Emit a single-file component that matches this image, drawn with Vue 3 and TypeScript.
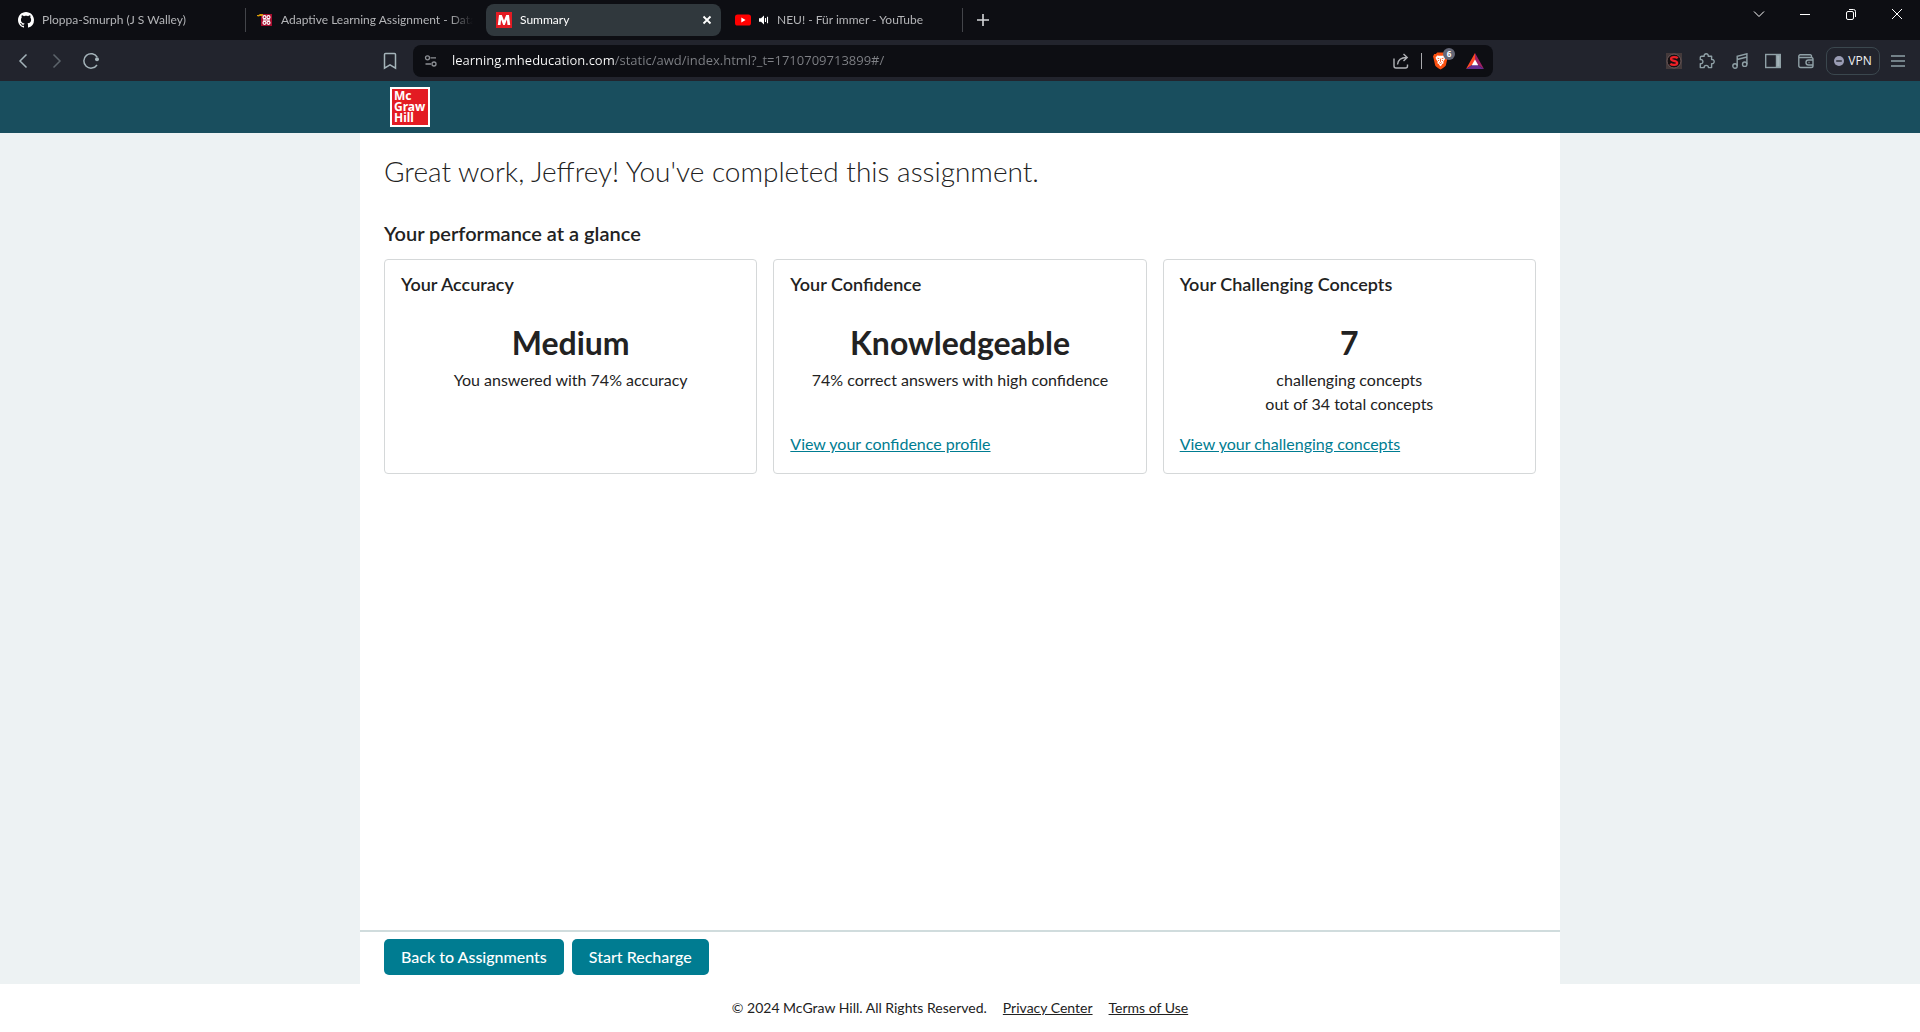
<script setup lang="ts">
import { ref } from 'vue'

interface Tab {
  id: string
  title: string
  active?: boolean
  divider?: boolean
}

interface Card {
  title: string
  value: string
  lines: string[]
  link?: string
}

const tabs: Tab[] = [
  { id: 'github', title: 'Ploppa-Smurph (J S Walley)', divider: true },
  { id: 'assignment', title: 'Adaptive Learning Assignment - Data' },
  { id: 'summary', title: 'Summary', active: true },
  { id: 'youtube', title: 'NEU! - Für immer - YouTube', divider: true },
]

const address = ref('learning.mheducation.com/static/awd/index.html?_t=1710709713899#/')

const cards: Card[] = [
  { title: 'Your Accuracy', value: 'Medium', lines: ['You answered with 74% accuracy'] },
  {
    title: 'Your Confidence',
    value: 'Knowledgeable',
    lines: ['74% correct answers with high confidence'],
    link: 'View your confidence profile',
  },
  {
    title: 'Your Challenging Concepts',
    value: '7',
    lines: ['challenging concepts', 'out of 34 total concepts'],
    link: 'View your challenging concepts',
  },
]
</script>

<template>
  <div class="window">
    <div class="tab-strip">
      <div class="tabs" role="tablist">
        <template v-for="tab in tabs" :key="tab.id">
          <div class="tab" :class="{ active: tab.active }" role="tab" :aria-selected="!!tab.active">
            <svg v-if="tab.id === 'github'" class="favicon" viewBox="0 0 16 16" aria-hidden="true">
              <path fill="#fff" d="M8 0C3.58 0 0 3.58 0 8c0 3.54 2.29 6.53 5.47 7.59.4.07.55-.17.55-.38 0-.19-.01-.82-.01-1.49-2.01.37-2.53-.49-2.69-.94-.09-.23-.48-.94-.82-1.13-.28-.15-.68-.52-.01-.53.63-.01 1.08.58 1.23.82.72 1.21 1.87.87 2.33.66.07-.52.28-.87.51-1.07-1.78-.2-3.64-.89-3.64-3.95 0-.87.31-1.59.82-2.15-.08-.2-.36-1.02.08-2.12 0 0 .67-.21 2.2.82.64-.18 1.32-.27 2-.27s1.36.09 2 .27c1.53-1.04 2.2-.82 2.2-.82.44 1.1.16 1.92.08 2.12.51.56.82 1.27.82 2.15 0 3.07-1.87 3.75-3.65 3.95.29.25.54.73.54 1.48 0 1.07-.01 1.93-.01 2.2 0 .21.15.46.55.38A8.01 8.01 0 0 0 16 8c0-4.42-3.58-8-8-8z" />
            </svg>
            <svg v-else-if="tab.id === 'assignment'" class="favicon" viewBox="0 0 16 16" aria-hidden="true">
              <rect x="4" y="2" width="11" height="12" fill="#a50d2e" />
              <path d="M0 4V3h1.500l1.500-1h3v2H3L1.500 4.500z" fill="#d99a06" />
              <g fill="none" stroke="#fff" stroke-width="1.200">
                <circle cx="7.500" cy="5.200" r="1.500" /><circle cx="11.500" cy="5.200" r="1.500" />
                <circle cx="7.500" cy="10.800" r="1.500" /><circle cx="11.500" cy="10.800" r="1.500" />
                <path d="M6 8h7" />
              </g>
            </svg>
            <svg v-else-if="tab.id === 'summary'" class="favicon" viewBox="0 0 16 16" aria-hidden="true">
              <rect width="16" height="16" fill="#e31b23" />
              <path d="M1.800 13L3 3h2.800L8 8.400 10.200 3H13l1.200 10h-2.700l-.6-5.500L8.800 13H7.200L5.100 7.500 4.500 13z" fill="#fff" />
            </svg>
            <template v-else>
              <svg class="favicon" viewBox="0 0 16 16" aria-hidden="true">
                <rect y="2.500" width="16" height="11" rx="2.600" fill="#f00" />
                <path d="M6.300 5.600v4.800L10.600 8z" fill="#fff" />
              </svg>
              <svg class="speaker" viewBox="0 0 10 10" aria-hidden="true">
                <path d="M0 3.200h2L5 .500v9L2 6.800H0z" fill="#fff" />
                <path d="M6.500 3v4M8.500 1.800v6.400" stroke="#fff" stroke-width="1.100" fill="none" />
              </svg>
            </template>
            <span class="tab-title">{{ tab.title }}</span>
            <button v-if="tab.active" class="tab-close" aria-label="Close tab">
              <svg viewBox="0 0 10 10"><path d="M1.500 1.500l7 7M8.500 1.500l-7 7" stroke="#fff" stroke-width="1.800" /></svg>
            </button>
          </div>
          <span class="divider" :class="{ shown: tab.divider }"></span>
        </template>
        <button class="new-tab" aria-label="New tab">
          <svg viewBox="0 0 12 12"><path d="M6 0v12M0 6h12" stroke="#d5d7da" stroke-width="1.600" /></svg>
        </button>
      </div>
      <div class="window-controls">
        <button aria-label="Search tabs"><svg viewBox="0 0 12 12"><path d="M1 3.500l5 5 5-5" /></svg></button>
        <button aria-label="Minimize"><svg viewBox="0 0 12 12"><path d="M1 6.500h10" /></svg></button>
        <button aria-label="Restore">
          <svg viewBox="0 0 12 12"><rect x="1.500" y="3.500" width="7" height="8" rx="1.500" /><path d="M4 1.500h4.500a2 2 0 0 1 2 2V9" /></svg>
        </button>
        <button aria-label="Close window"><svg viewBox="0 0 12 12"><path d="M1 1l10 10M11 1L1 11" /></svg></button>
      </div>
    </div>

    <div class="toolbar">
      <div class="nav-group">
        <button aria-label="Back"><svg viewBox="0 0 18 18"><path d="M12.500 2.500L6 9l6.500 6.500" /></svg></button>
        <button aria-label="Forward" disabled><svg viewBox="0 0 18 18"><path d="M5.500 2.500L12 9l-6.500 6.500" /></svg></button>
        <button aria-label="Reload">
          <svg viewBox="0 0 18 18"><path d="M15.200 5.200A7.200 7.200 0 1 0 15 13" /><circle cx="15" cy="7.300" r="2" fill="#a4b3b9" stroke="none" /></svg>
        </button>
        <button class="bookmark" aria-label="Bookmark this page">
          <svg viewBox="0 0 18 18"><path d="M3.500 2.500a1 1 0 0 1 1-1h9a1 1 0 0 1 1 1v13.700L9 12.800l-5.500 3.400z" /></svg>
        </button>
      </div>

      <div class="address-bar">
        <button class="site-info" aria-label="Site information">
          <svg viewBox="0 0 14 14"><circle cx="3.500" cy="3.800" r="2" /><path d="M6.500 3.800H12M1.500 10h5.500" /><circle cx="10" cy="10" r="2" /></svg>
        </button>
        <input v-model="address" class="address" type="text" aria-label="Address" spellcheck="false" />
        <button class="share" aria-label="Share">
          <svg viewBox="0 0 18 18"><path d="M2 6.500V14a2 2 0 0 0 2 2h9.500a2 2 0 0 0 2-2v-1.500M5.500 12.500C6 8 8.500 5.500 14.500 5.500M11.500 2l3.700 3.500-3.700 3.500" /></svg>
        </button>
        <span class="bar-rule"></span>
        <button class="shield" aria-label="Brave Shields">
          <svg viewBox="0 0 16 18">
            <path d="M4.500 0h7l1.500 1.600 1.700-.2L16 4.200l-.6 1.800-1.600 7.200c-.3 1.300-1.400 2.100-5.800 4.800-4.400-2.700-5.500-3.500-5.800-4.800L.600 6 0 4.200l1.300-2.800 1.700.2z" fill="#fb5010" />
            <path d="M4.500 3l2 .5h3l2-.5 1.800 2.500-.8 2-1.500 2 .3 1.800-1.500.9-.9 1.600L8 14.600l-.9-.8-.9-1.600-1.500-.9.300-1.800-1.500-2-.8-2z" fill="#fff" />
            <path d="M4.800 6l1.900.5M11.200 6l-1.900.5M8 6.500v3.500M6.500 10.700L8 11.600l1.500-.9M5.300 8.500h1.200M9.500 8.500h1.200" stroke="#fb5010" stroke-width=".9" fill="none" />
          </svg>
          <span class="badge">6</span>
        </button>
        <button class="rewards" aria-label="Brave Rewards">
          <svg viewBox="0 0 18 16">
            <path d="M9 0L0 16l9-6z" fill="#ff4724" /><path d="M9 0l9 16-9-6z" fill="#9e1f63" /><path d="M0 16h18l-9-6z" fill="#662d91" />
            <path d="M9 6.400L5.700 12.200h6.600z" fill="#fff" />
          </svg>
        </button>
      </div>

      <div class="extension-group">
        <button aria-label="S extension">
          <svg viewBox="0 0 16 16">
            <rect width="16" height="16" fill="#443a3b" /><circle cx="8" cy="8" r="7" fill="#151012" stroke="#6a5a5c" stroke-width="1" />
            <path d="M11.700 5.200C10.500 3.700 5 3.600 5 6c0 2.500 6.200 1.200 6.200 4 0 2.500-5.500 2.300-6.900.7" fill="none" stroke="#ee2027" stroke-width="2.200" />
          </svg>
        </button>
        <button aria-label="Extensions">
          <svg class="line" viewBox="0 0 16 16"><path d="M2.600 3.200h2.600C4.900 1.700 5.800.8 7.200.8s2.300.9 2 2.400h3.400v3.400c1.600-.3 2.600.6 2.600 2s-1 2.300-2.600 2v4H9.400c.2-1.500-.8-2.200-2.200-2.200s-2.300.7-2 2.200H1.300v-4c1.700.3 2.600-.6 2.600-2s-.9-2.200-2.600-2V4.500a1.300 1.300 0 0 1 1.300-1.300z" stroke-linejoin="round" /></svg>
        </button>
        <button aria-label="Media">
          <svg class="line" viewBox="0 0 16 16"><circle cx="3" cy="13" r="2.200" /><circle cx="12.700" cy="11.200" r="2.200" /><path d="M5.200 13V3.300L14.900.8v10.400M5.200 6.500l9.700-2.500" /></svg>
        </button>
        <button aria-label="Side panel">
          <svg class="line" viewBox="0 0 16 16"><rect x=".7" y="1.500" width="14.600" height="13" /><path d="M11.500 2h3.500v12h-3.500z" fill="#a4b3b9" /></svg>
        </button>
        <button aria-label="Wallet">
          <svg class="line" viewBox="0 0 16 16"><path d="M13.500 4.500V3a1.200 1.200 0 0 0-1.200-1.200H2.200A1.300 1.300 0 0 0 .8 3.100v9.600a1.800 1.800 0 0 0 1.800 1.800h10.600a1.800 1.800 0 0 0 1.800-1.800V6.300a1.800 1.800 0 0 0-1.800-1.800H2.200A1.300 1.300 0 0 1 .8 3.100M15 7h-4.500a2.500 2.500 0 0 0 0 5H15M10.500 9.500h1" /></svg>
        </button>
        <button class="vpn">
          <svg viewBox="0 0 10 10" aria-hidden="true"><circle cx="5" cy="5" r="5" fill="#9a9cb4" /><path d="M2.200 5h5.600" stroke="#22242d" stroke-width="1.400" /></svg>
          VPN
        </button>
        <button class="menu" aria-label="Menu">
          <svg class="line" viewBox="0 0 14 14"><path d="M0 2h14M0 7h14M0 12h14" /></svg>
        </button>
      </div>
    </div>

    <header class="site-header">
      <div class="site-header-inner">
        <a class="logo" href="#">Mc<br />Graw<br />Hill</a>
      </div>
    </header>

    <div class="page">
      <main class="content">
        <section class="summary">
          <h1>Great work, Jeffrey! You've completed this assignment.</h1>
          <h2>Your performance at a glance</h2>
          <div class="cards">
            <article v-for="card in cards" :key="card.title" class="card">
              <h3>{{ card.title }}</h3>
              <p class="value">{{ card.value }}</p>
              <p v-for="line in card.lines" :key="line" class="detail">{{ line }}</p>
              <a v-if="card.link" href="#">{{ card.link }}</a>
            </article>
          </div>
        </section>
        <div class="actions">
          <button>Back to Assignments</button>
          <button>Start Recharge</button>
        </div>
      </main>
    </div>

    <footer class="footer">
      <span>© 2024 McGraw Hill. All Rights Reserved.</span>
      <a href="#">Privacy Center</a>
      <a href="#">Terms of Use</a>
    </footer>
  </div>
</template>

<style>
body {
  margin: 0;
}
</style>

<style scoped>
.window {
  display: flex;
  flex-direction: column;
  min-height: 100vh;
  background: #fff;
  color: #222;
  font-family: Lato, "Open Sans", sans-serif;
}

button {
  margin: 0;
  padding: 0;
  border: 0;
  background: none;
  color: inherit;
  font: inherit;
}

svg {
  display: block;
  flex: none;
}

/* Tab strip */
.tab-strip {
  display: flex;
  justify-content: space-between;
  height: 40px;
  background: #0d0e13;
  color: #b4b5b8;
  font-size: 12px;
  line-height: 16px;
}

.tabs {
  display: flex;
  align-items: center;
  flex: 1;
  min-width: 0;
  padding-left: 8px;
}

.tab {
  display: flex;
  align-items: center;
  gap: 8px;
  box-sizing: border-box;
  flex: 0 1 235px;
  min-width: 0;
  height: 32px;
  padding: 0 9px 0 10px;
  border-radius: 8px;
}

.tab.active {
  background: #30383d;
  color: #fff;
}

.favicon {
  width: 16px;
  height: 16px;
}

.speaker {
  width: 10px;
  height: 10px;
}

.tab-title {
  flex: 1;
  overflow: hidden;
  white-space: nowrap;
  mask-image: linear-gradient(to right, #000 calc(100% - 24px), transparent);
}

.tab-close svg {
  width: 10px;
  height: 10px;
}

.divider {
  width: 1px;
  height: 24px;
  margin: 0 1px 0 2px;
}

.divider.shown {
  background: #43454a;
}

.new-tab {
  margin-left: 13px;
}

.new-tab svg {
  width: 12px;
  height: 12px;
}

.window-controls {
  display: flex;
  height: 28px;
}

.window-controls button {
  display: grid;
  place-items: center;
  width: 46px;
}

.window-controls svg {
  width: 12px;
  height: 12px;
  fill: none;
  stroke: #fff;
}

/* Toolbar */
.toolbar {
  display: flex;
  align-items: center;
  height: 41px;
  background: #22242d;
  font-family: "Open Sans", "Noto Sans", sans-serif;
}

.nav-group {
  display: flex;
  box-sizing: border-box;
  width: 413px;
  padding: 0 14px;
}

.nav-group button {
  width: 18px;
  margin-right: 16px;
}

.nav-group svg {
  width: 18px;
  height: 18px;
  fill: none;
  stroke: #a4b3b9;
  stroke-width: 1.5px;
}

.nav-group button:disabled svg {
  stroke: #5c646b;
}

.nav-group .bookmark {
  margin: 0 0 0 auto;
}

.address-bar {
  display: flex;
  align-items: center;
  box-sizing: border-box;
  flex: 1;
  min-width: 0;
  height: 32px;
  padding: 0 9px 0 11px;
  border-radius: 8px;
  background: #0d0e13;
}

.site-info svg {
  width: 14px;
  height: 14px;
  fill: none;
  stroke: #8d9095;
  stroke-width: 1.3px;
}

.address {
  flex: 1;
  min-width: 0;
  height: 24px;
  margin: 0 16px 0 14px;
  padding: 0 0 1px;
  border: 0;
  outline: 0;
  background: linear-gradient(to right, #fff 163px, #7f8186 163px);
  background-clip: text;
  color: transparent;
  font: 13px/22px "Open Sans", "Noto Sans", sans-serif;
}

.share svg {
  width: 18px;
  height: 18px;
  fill: none;
  stroke: #b0b2b6;
  stroke-width: 1.4px;
}

.bar-rule {
  width: 1px;
  height: 16px;
  margin: 0 11px;
  background: #a9aaad;
}

.shield {
  position: relative;
  margin-right: 18px;
}

.shield svg {
  width: 15px;
  height: 18px;
}

.badge {
  position: absolute;
  top: -4px;
  left: 10px;
  width: 12px;
  height: 12px;
  border-radius: 6px;
  background: #646776;
  color: #fff;
  font-size: 8px;
  font-weight: 700;
  line-height: 12px;
  text-align: center;
}

.rewards svg {
  width: 18px;
  height: 16px;
}

.extension-group {
  display: flex;
  align-items: center;
  justify-content: flex-end;
  box-sizing: border-box;
  width: 427px;
  padding-right: 15px;
}

.extension-group button {
  display: grid;
  place-items: center;
  width: 33px;
  height: 28px;
}

.extension-group svg {
  width: 16px;
  height: 16px;
}

.extension-group .line {
  fill: none;
  stroke: #8fa0a6;
  stroke-width: 1.4px;
}

.extension-group .vpn {
  display: flex;
  align-items: center;
  justify-content: center;
  gap: 4px;
  width: 54px;
  margin: 0 11px 0 4px;
  border: 1px solid #3b474e;
  border-radius: 8px;
  color: #f0f1f4;
  font-size: 12px;
}

.extension-group .vpn svg {
  width: 10px;
  height: 10px;
}

.extension-group .menu {
  width: 14px;
}

.extension-group .menu svg {
  width: 14px;
  height: 14px;
}

/* Site header */
.site-header {
  background: #194e5e;
}

.site-header-inner {
  display: flex;
  align-items: center;
  box-sizing: border-box;
  max-width: 1200px;
  height: 52px;
  margin: 0 auto;
  padding: 0 30px;
}

.logo {
  box-sizing: border-box;
  width: 40px;
  height: 40px;
  padding: 1px 0 0 2px;
  border: 2px solid #fff;
  background: #e31b23;
  color: #fff;
  font: 700 12px/11px "Noto Sans", "Open Sans", sans-serif;
  text-decoration: none;
}

/* Page */
.page {
  display: flex;
  flex: 1;
  background: #edf2f3;
}

.content {
  display: flex;
  flex-direction: column;
  flex: 1;
  max-width: 1200px;
  margin: 0 auto;
  background: #fff;
}

.summary {
  flex: 1;
  padding: 20px 24px;
}

h1,
h2,
h3,
p {
  margin: 0;
}

h1 {
  font-size: 28px;
  font-weight: 300;
  line-height: 36px;
}

h2 {
  margin-top: 32px;
  font-size: 20px;
  font-weight: 600;
  line-height: 24px;
}

.cards {
  display: grid;
  grid-template-columns: repeat(3, 1fr);
  gap: 16px;
  margin-top: 14px;
}

.card {
  display: flex;
  flex-direction: column;
  box-sizing: border-box;
  min-height: 215px;
  padding: 12px 16px 17px;
  border: 1px solid #d5d8d9;
  border-radius: 4px;
}

h3 {
  font-size: 18px;
  font-weight: 600;
  line-height: 24px;
}

.value {
  margin: 27px 0 5px;
  font-size: 32px;
  font-weight: 700;
  line-height: 40px;
  text-align: center;
}

.detail {
  font-size: 16px;
  line-height: 24px;
  text-align: center;
}

.card a {
  align-self: flex-start;
  margin-top: auto;
  color: #007c91;
  font-size: 16px;
  line-height: 24px;
}

.actions {
  display: flex;
  gap: 8px;
  padding: 7px 24px 9px;
  border-top: 2px solid #d0dcdd;
}

.actions button {
  height: 36px;
  padding: 0 17px 2px;
  border-radius: 5px;
  background: #007c91;
  color: #fff;
  font-size: 16px;
  font-weight: 500;
}

.footer {
  display: flex;
  align-items: center;
  justify-content: center;
  gap: 16px;
  box-sizing: border-box;
  height: 48px;
  padding-bottom: 2px;
  font-size: 14px;
}

.footer a {
  color: inherit;
}
</style>
